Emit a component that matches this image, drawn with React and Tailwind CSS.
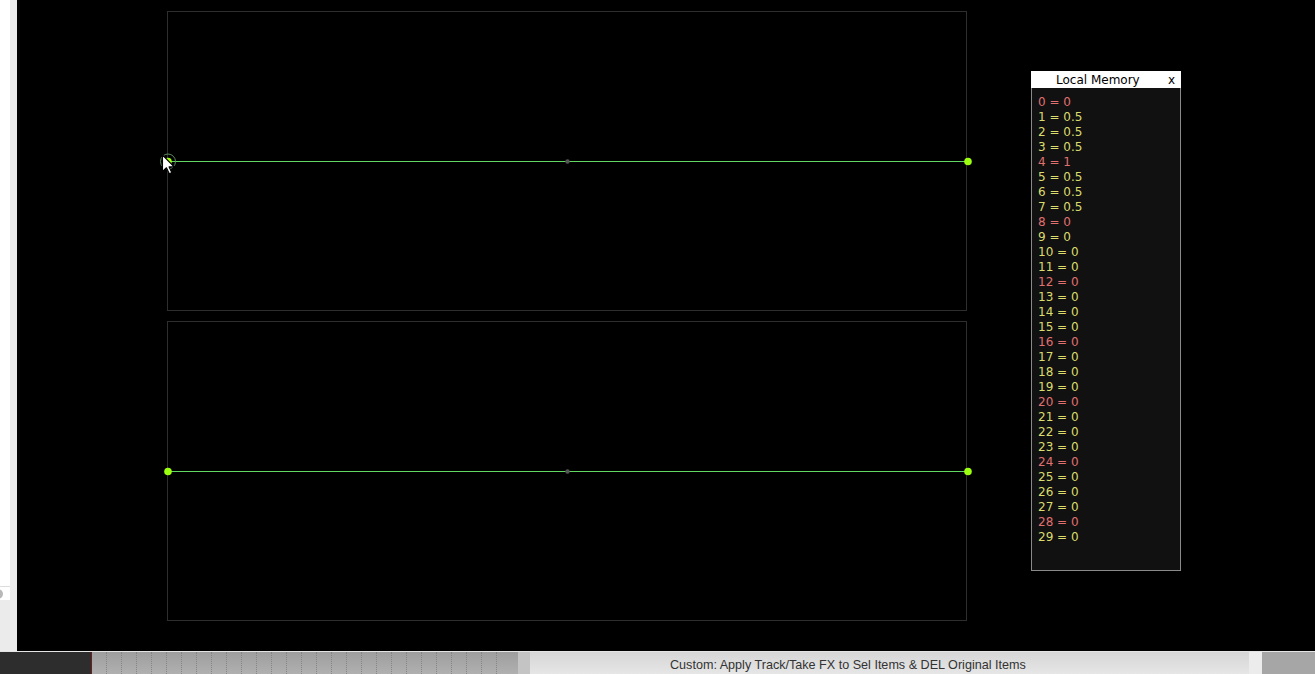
import React from "react";

const memory = [0, 0.5, 0.5, 0.5, 1, 0.5, 0.5, 0.5, ...Array(22).fill(0)];

const Envelope = ({ hover }) => (
  <div className="relative w-[800px] h-[300px] border border-[#2e2e2e]">
    <svg
      className="absolute -left-[1px] -top-[1px] overflow-visible"
      width="802"
      height="302"
    >
      <line x1="1" y1="150.5" x2="801" y2="150.5" stroke="#62d862" strokeWidth="1" />
      <circle cx="400.5" cy="150.5" r="2.2" fill="#555" />
      <circle cx="1" cy="150.5" r="3.8" fill="#9cff10" />
      <circle cx="801" cy="150.5" r="3.8" fill="#9cff10" />
      {hover && (
        <g>
          <circle cx="1" cy="150.5" r="7.5" fill="none" stroke="#5f8a5f" strokeWidth="1" />
          <path
            transform="translate(-4.5 144) scale(1.1)"
            d="M0 0 L0 15 L3.6 11.6 L6.2 17 L8.4 16 L5.9 10.8 L10.6 10.8 Z"
            fill="#fff"
            stroke="#000"
            strokeWidth="1"
            strokeLinejoin="round"
          />
        </g>
      )}
    </svg>
  </div>
);

export default function App() {
  return (
    <div className="w-[1315px] h-[674px] flex flex-col overflow-hidden bg-black">
      <div className="flex h-[651px]">
        <div className="w-[17px] flex flex-col bg-[#ebebeb]">
          <div className="w-[10px] h-[586px] bg-white" />
          <div className="w-[10px] h-[1px] bg-[#dcdcdc]" />
          <div className="w-[10px] h-[13px] bg-white flex items-center overflow-hidden">
            <div className="w-[10px] h-[10px] -ml-[7px] rounded-full bg-[#b8b8b8]" />
          </div>
        </div>
        <div className="flex-1 flex bg-black">
          <div className="pl-[150px] pt-[11px] flex flex-col gap-[10px]">
            <Envelope hover />
            <Envelope />
          </div>
          <div className="ml-[64px] mt-[71px] w-[150px] h-[500px] flex flex-col font-['DejaVu_Sans',sans-serif] text-[12px]">
            <div className="h-[17px] bg-white flex items-center justify-between pl-[25px] pr-[6px] pt-[2px] text-black leading-[15px]">
              <span>Local Memory</span>
              <span>x</span>
            </div>
            <div className="flex-1 bg-[#111] border border-t-0 border-[#8a8a8a] pt-[7px] pl-[6px] leading-[15px]">
              {memory.map((v, i) => (
                <div
                  key={i}
                  className={i % 4 === 0 ? "text-[#e07070]" : "text-[#dcdc6c]"}
                >
                  {i} = {v}
                </div>
              ))}
            </div>
          </div>
        </div>
      </div>
      <div className="h-[1px] bg-[#e4e4e4]" />
      <div className="flex-1 flex font-['Liberation_Sans',sans-serif]">
        <div className="w-[92px] bg-[#2d2d2d] border-r border-[#6a2020]" />
        <div className="w-[426px] flex bg-gradient-to-b from-[#9e9e9e] to-[#b0b0b0]">
          {Array.from({ length: 28 }).map((_, i) => (
            <div
              key={i}
              className="w-[15px] h-full border-r border-dotted border-[#858585] last:border-r-0"
            />
          ))}
        </div>
        <div className="w-[12px] bg-[#c4c4c4]" />
        <div className="w-[719px] bg-gradient-to-b from-[#d6d6d6] to-[#e6e6e6] flex items-end pl-[140px] pb-[1px]">
          <span className="text-[12.6px] text-[#333] leading-[15px] whitespace-nowrap">
            Custom: Apply Track/Take FX to Sel Items &amp; DEL Original Items
          </span>
        </div>
        <div className="w-[13px] bg-[#ececec]" />
        <div className="flex-1 bg-[#a6a6a6]" />
      </div>
    </div>
  );
}
